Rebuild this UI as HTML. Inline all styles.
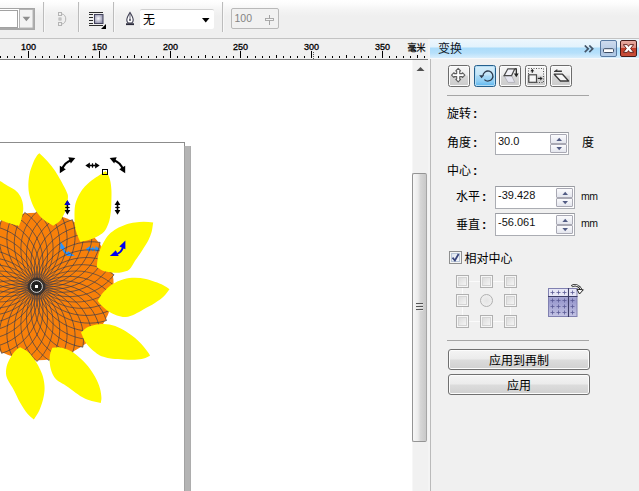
<!DOCTYPE html>
<html lang="zh-CN"><head><meta charset="utf-8"><title>变换</title>
<style>
*{box-sizing:border-box;margin:0;padding:0}
html,body{width:639px;height:491px;overflow:hidden;background:#fff}
body{position:relative;font-family:"Liberation Sans","Noto Sans CJK SC",sans-serif;font-size:12px;color:#000;line-height:1}
div,svg,span{position:absolute}
.toolbar{left:0;top:0;width:639px;height:38px;background:linear-gradient(#ffffff 0,#fcfcfc 4px,#f4f4f4 10px,#efefef 16px,#efefef 100%)}
.tline{left:0;top:38px;width:639px;height:1px;background:#c3c3c3}
.sep{top:2px;width:1px;height:30px;background:#bcbcbc;box-shadow:1px 0 0 #f8f8f8}
.ruler{left:0;top:39px;width:430px;height:20px;background:#f0f0f0}
.rline{left:0;top:59px;width:430px;height:1px;background:#7d7d7d}
.rl{top:42.600px;width:21px;text-align:center;font-size:9px;line-height:8px;height:8px;color:#000;letter-spacing:0;-webkit-text-stroke:0.3px #000}
.unit{left:407.500px;top:42.500px;font-size:9px;line-height:10px;color:#000;white-space:nowrap;-webkit-text-stroke:0.250px #000}
.cv{left:0;top:60px}
.vs{left:412px;top:60px;width:16px;height:431px;background:#f1f1f1;border-left:1px solid #f7f7f7}
.thumb{left:412px;top:173px;width:15px;height:269px;border:1px solid #949494;border-radius:2px;background:linear-gradient(90deg,#f7f7f7 0,#ececec 38%,#d6d6d6 58%,#c8c8c8 100%);border-right-color:#a6a6a6}
.grip{left:416px;top:303px;width:7px;height:1px;background:#555;box-shadow:0 1px 0 #e8e8e8,0 3px 0 #555,0 4px 0 #e8e8e8,0 6px 0 #555,0 7px 0 #e8e8e8}
.gap{left:428px;top:39px;width:2px;height:452px;background:#f4f4f4}
.dock{left:430px;top:39px;width:209px;height:452px;background:#f0f0f0;border-left:1px solid #bababa}
.dtitle{left:430px;top:39px;width:209px;height:19px;background:linear-gradient(#eef7fd 0,#e2f2fc 8px,#abdcfa 9px,#b6e0fb 14px,#d9eefc 19px)}
.dtitle .t{left:8px;top:3px;font-size:12px;line-height:15px;white-space:nowrap;color:#101828}
.dline{left:430px;top:58px;width:209px;height:1px;background:#f7f9fb}
.chev{left:583.500px;top:44.700px}
.wb{top:40px;width:17px;height:17px;border-radius:2px}
.wmin{left:600px;background:linear-gradient(#cddbee 0,#bccfe7 45%,#a9c2df 50%,#b4cbe6 100%);border:1px solid #587aa2}
.wcls{left:620px;background:linear-gradient(#e6aaa0 0,#dc8c80 45%,#c23c28 50%,#c8503c 100%);border:1px solid #431a18}
.tb{top:65px;width:22px;height:21.500px;border:1px solid #6c6c6c;border-radius:2.500px;background:linear-gradient(#f7f7f7 0,#ededed 45%,#d7d7d7 52%,#cbcbcb 100%);box-shadow:inset 0 0 0 1px #fbfbfb}
.tb svg{left:0;top:0}
.tb.sel{border-color:#245f8c;background:linear-gradient(#d6edf9 0,#c4e5f7 42%,#a6d8f5 52%,#8fcef4 76%,#5cb5ee 100%);box-shadow:inset 0 0 0 1px #b4dcf4;border-radius:2.500px}
.hr{left:447px;width:142px;height:1px;background:#a5a5a5}
.c{position:relative;font-weight:bold;font-size:13px;margin-left:2px;top:0px}
.lb{font-size:12px;line-height:14px;height:14px;white-space:nowrap;color:#000}
.inp{height:22.500px;background:#fff;border:1px solid #abadb3;border-top-color:#9a9ca2}
.inp .v{left:2px;top:2px;font-size:11px;line-height:12px;white-space:nowrap;color:#111}
.sp{width:17px;height:19px}
.sb{left:0;width:17px;height:9.500px;border:1px solid #a9a9b4;background:linear-gradient(#fbfbfd,#e4e6ee);border-radius:1px;overflow:hidden}
.sb:nth-child(1){top:0}
.sb:nth-child(2){top:9.500px}
.sb svg{left:-0.500px;top:-0.500px}
.mm{letter-spacing:-0.500px;font-size:10.500px;line-height:12px;white-space:nowrap;color:#111}
.cb{left:449px;top:251px;width:13px;height:13px;border:1px solid #8e8f8f;background:#f4f4f4}
.cb i{position:absolute;left:1px;top:1px;width:9px;height:9px;border:1px solid #b9c6d8;background:linear-gradient(135deg,#dfe6f0,#f6f8fb)}
.cb svg{left:0;top:0}
.ac{width:13px;height:13px;border:1px solid #b0b0b0;background:#f6f6f6}
.ac i{position:absolute;left:1px;top:1px;width:9px;height:9px;border:1px solid #d4d4d4;background:linear-gradient(135deg,#dcdcdc,#f4f4f4)}
.ar{width:13px;height:13px;border:1px solid #b0b0b0;border-radius:50%;background:radial-gradient(#e4e4e4,#f2f2f2)}
.agl{background:#fbfbfb}
.gi{left:546px;top:283px}
.btn{left:448px;width:142px;height:21px;border:1px solid #707070;border-radius:3px;background:linear-gradient(#f4f4f4 0,#ebebeb 48%,#dcdcdc 52%,#d0d0d0 100%);box-shadow:inset 0 0 0 1px #fcfcfc;text-align:center;font-size:12px;line-height:22px;white-space:nowrap}
.combo1{left:-2px;top:8px;width:37px;height:22px;border:1px solid #a6a6a6;border-right-width:2px;border-bottom-width:2px;background:#fff}
.combo1 .f{left:0;top:1px;width:19px;height:18px;border:1px solid #a9a9a9;background:#fff}
.combo1 .d{left:20px;top:0px;width:14px;height:19px;background:#f3f3f3}
.combo2{left:140px;top:9px;width:74px;height:20px;background:#fff;border-radius:2px;border-top:1px solid #d0d0d0}
.combo2 .t{left:3px;top:3px;font-size:12px;line-height:15px;color:#000}
.dis{left:231px;top:8px;width:48px;height:21px;border:1px solid #b9b9b9;border-radius:2px;background:#f1f1f1}
.dis .t{left:2.500px;top:3px;font-size:10.500px;line-height:12px;color:#848484}
</style></head><body>
<div class="toolbar"></div>
<svg style="left:0;top:6px" width="37" height="26" viewBox="0 6 37 26"><rect x="0" y="8" width="35" height="22" fill="#fff"/><rect x="0" y="8" width="35" height="1" fill="#a4a4a4"/><rect x="33" y="8" width="2" height="22" fill="#a8a8a8"/><rect x="0" y="28" width="35" height="2" fill="#a8a8a8"/><rect x="-1.500" y="10.500" width="19" height="17" fill="#fff" stroke="#a2a2a2" stroke-width="1"/><rect x="19.500" y="9.500" width="13.500" height="18.500" fill="#f3f3f3" stroke="#b4b4b4" stroke-width="1"/><path d="M22.600,16.800 H30.200 L26.400,21.200Z" fill="#8e8e8e"/></svg>
<div class="sep" style="left:43px"></div>
<svg style="left:55px;top:10px" width="14" height="18" viewBox="55 10 14 18"><g fill="none" stroke="#b4b4b4" stroke-width="1"><rect x="58.500" y="12.500" width="3" height="3"/><rect x="58.500" y="22.500" width="3" height="3"/><rect x="59" y="18" width="2" height="2"/><path d="M62,14 C67,14.500 67,23.500 62,24"/></g></svg>
<div class="sep" style="left:78px"></div>
<svg style="left:86px;top:10px" width="24" height="22" viewBox="86 10 24 22"><defs><radialGradient id="wg" cx="0.45" cy="0.45" r="0.6"><stop offset="0" stop-color="#fafafe"/><stop offset="1" stop-color="#8c8ca8"/></radialGradient></defs><path d="M89,12.500 H103 M89,14.500 H93 M89,17.500 H93 M89,20.500 H93 M89,23.500 H93 M89,25.500 H103" stroke="#2c2c2c" stroke-width="1" fill="none"/><rect x="94.500" y="14.500" width="8.500" height="9" fill="url(#wg)" stroke="#44445c" stroke-width="1"/><path d="M106,24 L106,29 L101,29Z" fill="#000"/></svg>
<div class="sep" style="left:113px"></div>
<svg style="left:124px;top:10px" width="12" height="18" viewBox="124 10 12 18"><path d="M130,12.500 C128.500,15 126.800,17.500 126.800,20 C126.800,21.500 127.500,22.500 128.200,23 H131.800 C132.500,22.500 133.200,21.500 133.200,20 C133.200,17.500 131.500,15 130,12.500Z" fill="#fff" stroke="#3c3c50" stroke-width="1.100"/><path d="M130,14 V19.500" stroke="#3c3c50" stroke-width="0.800"/><circle cx="130" cy="20" r="0.900" fill="#3c3c50"/><rect x="126" y="23.300" width="8" height="1.800" fill="#2a2a3a"/></svg>
<div class="combo2"><div class="t">无</div><svg style="left:62px;top:8px" width="8" height="5" viewBox="0 0 8 5"><path d="M0,0 H7.500 L3.750,4.500Z" fill="#000"/></svg></div>
<div class="sep" style="left:222px"></div>
<div class="dis"><div class="t">100</div><svg style="left:30.500px;top:5px" width="12" height="12" viewBox="0 0 12 12"><path d="M6.500,1 V11" stroke="#a4a4a4" stroke-width="1"/><rect x="2.500" y="4.500" width="8" height="2" fill="#f4f4f4" stroke="#a4a4a4" stroke-width="0.900"/></svg></div>
<div class="tline"></div>
<div class="ruler"></div>
<svg style="left:0;top:0" width="430" height="60" viewBox="0 0 430 60" fill="#000"><rect x="0" y="56" width="1" height="2"/><rect x="7" y="56" width="1" height="2"/><rect x="14" y="56" width="1" height="2"/><rect x="21" y="56" width="1" height="2"/><rect x="28" y="51" width="1" height="7"/><rect x="35" y="56" width="1" height="2"/><rect x="42" y="56" width="1" height="2"/><rect x="49" y="56" width="1" height="2"/><rect x="57" y="56" width="1" height="2"/><rect x="64" y="55" width="1" height="3"/><rect x="71" y="56" width="1" height="2"/><rect x="78" y="56" width="1" height="2"/><rect x="85" y="56" width="1" height="2"/><rect x="92" y="56" width="1" height="2"/><rect x="99" y="51" width="1" height="7"/><rect x="106" y="56" width="1" height="2"/><rect x="113" y="56" width="1" height="2"/><rect x="120" y="56" width="1" height="2"/><rect x="127" y="56" width="1" height="2"/><rect x="134" y="55" width="1" height="3"/><rect x="141" y="56" width="1" height="2"/><rect x="148" y="56" width="1" height="2"/><rect x="156" y="56" width="1" height="2"/><rect x="163" y="56" width="1" height="2"/><rect x="170" y="51" width="1" height="7"/><rect x="177" y="56" width="1" height="2"/><rect x="184" y="56" width="1" height="2"/><rect x="191" y="56" width="1" height="2"/><rect x="198" y="56" width="1" height="2"/><rect x="205" y="55" width="1" height="3"/><rect x="212" y="56" width="1" height="2"/><rect x="219" y="56" width="1" height="2"/><rect x="226" y="56" width="1" height="2"/><rect x="233" y="56" width="1" height="2"/><rect x="240" y="51" width="1" height="7"/><rect x="247" y="56" width="1" height="2"/><rect x="255" y="56" width="1" height="2"/><rect x="262" y="56" width="1" height="2"/><rect x="269" y="56" width="1" height="2"/><rect x="276" y="55" width="1" height="3"/><rect x="283" y="56" width="1" height="2"/><rect x="290" y="56" width="1" height="2"/><rect x="297" y="56" width="1" height="2"/><rect x="304" y="56" width="1" height="2"/><rect x="311" y="51" width="1" height="7"/><rect x="318" y="56" width="1" height="2"/><rect x="325" y="56" width="1" height="2"/><rect x="332" y="56" width="1" height="2"/><rect x="339" y="56" width="1" height="2"/><rect x="346" y="55" width="1" height="3"/><rect x="354" y="56" width="1" height="2"/><rect x="361" y="56" width="1" height="2"/><rect x="368" y="56" width="1" height="2"/><rect x="375" y="56" width="1" height="2"/><rect x="382" y="51" width="1" height="7"/><rect x="389" y="56" width="1" height="2"/><rect x="396" y="56" width="1" height="2"/><rect x="403" y="56" width="1" height="2"/><rect x="410" y="56" width="1" height="2"/><rect x="417" y="55" width="1" height="3"/><rect x="424" y="56" width="1" height="2"/><path d="M313.500,52 V59" stroke="#555" stroke-width="1" stroke-dasharray="1 1"/></svg>
<div class="rl" style="left:18.0px">100</div><div class="rl" style="left:89.0px">150</div><div class="rl" style="left:160.0px">200</div><div class="rl" style="left:230.0px">250</div><div class="rl" style="left:301.0px">300</div><div class="rl" style="left:372.0px">350</div>
<div class="unit">毫米</div>
<div class="rline"></div>
<svg class="cv" width="412" height="431" viewBox="0 60 412 431"><rect x="184" y="146" width="7" height="350" fill="#b4b4b4"/><rect x="184" y="146" width="1" height="350" fill="#a2a2a2"/><rect x="190" y="146" width="1" height="350" fill="#adadad"/><rect x="-1" y="142" width="186" height="1" fill="#8c8c8c"/><rect x="184" y="142" width="1" height="4" fill="#8c8c8c"/><g transform="translate(37.0,286.5) scale(1.04,1)"><circle r="73.800" fill="#f8800a"/><g fill="#f8800a" stroke="none"><path d="M0,0 C-20.7,-20.7 -20.7,-54.3 0,-75 C20.7,-54.3 20.7,-20.7 0,0Z" transform="rotate(0.00)"/><path d="M0,0 C-20.7,-20.7 -20.7,-54.3 0,-75 C20.7,-54.3 20.7,-20.7 0,0Z" transform="rotate(9.00)"/><path d="M0,0 C-20.7,-20.7 -20.7,-54.3 0,-75 C20.7,-54.3 20.7,-20.7 0,0Z" transform="rotate(18.00)"/><path d="M0,0 C-20.7,-20.7 -20.7,-54.3 0,-75 C20.7,-54.3 20.7,-20.7 0,0Z" transform="rotate(27.00)"/><path d="M0,0 C-20.7,-20.7 -20.7,-54.3 0,-75 C20.7,-54.3 20.7,-20.7 0,0Z" transform="rotate(36.00)"/><path d="M0,0 C-20.7,-20.7 -20.7,-54.3 0,-75 C20.7,-54.3 20.7,-20.7 0,0Z" transform="rotate(45.00)"/><path d="M0,0 C-20.7,-20.7 -20.7,-54.3 0,-75 C20.7,-54.3 20.7,-20.7 0,0Z" transform="rotate(54.00)"/><path d="M0,0 C-20.7,-20.7 -20.7,-54.3 0,-75 C20.7,-54.3 20.7,-20.7 0,0Z" transform="rotate(63.00)"/><path d="M0,0 C-20.7,-20.7 -20.7,-54.3 0,-75 C20.7,-54.3 20.7,-20.7 0,0Z" transform="rotate(72.00)"/><path d="M0,0 C-20.7,-20.7 -20.7,-54.3 0,-75 C20.7,-54.3 20.7,-20.7 0,0Z" transform="rotate(81.00)"/><path d="M0,0 C-20.7,-20.7 -20.7,-54.3 0,-75 C20.7,-54.3 20.7,-20.7 0,0Z" transform="rotate(90.00)"/><path d="M0,0 C-20.7,-20.7 -20.7,-54.3 0,-75 C20.7,-54.3 20.7,-20.7 0,0Z" transform="rotate(99.00)"/><path d="M0,0 C-20.7,-20.7 -20.7,-54.3 0,-75 C20.7,-54.3 20.7,-20.7 0,0Z" transform="rotate(108.00)"/><path d="M0,0 C-20.7,-20.7 -20.7,-54.3 0,-75 C20.7,-54.3 20.7,-20.7 0,0Z" transform="rotate(117.00)"/><path d="M0,0 C-20.7,-20.7 -20.7,-54.3 0,-75 C20.7,-54.3 20.7,-20.7 0,0Z" transform="rotate(126.00)"/><path d="M0,0 C-20.7,-20.7 -20.7,-54.3 0,-75 C20.7,-54.3 20.7,-20.7 0,0Z" transform="rotate(135.00)"/><path d="M0,0 C-20.7,-20.7 -20.7,-54.3 0,-75 C20.7,-54.3 20.7,-20.7 0,0Z" transform="rotate(144.00)"/><path d="M0,0 C-20.7,-20.7 -20.7,-54.3 0,-75 C20.7,-54.3 20.7,-20.7 0,0Z" transform="rotate(153.00)"/><path d="M0,0 C-20.7,-20.7 -20.7,-54.3 0,-75 C20.7,-54.3 20.7,-20.7 0,0Z" transform="rotate(162.00)"/><path d="M0,0 C-20.7,-20.7 -20.7,-54.3 0,-75 C20.7,-54.3 20.7,-20.7 0,0Z" transform="rotate(171.00)"/><path d="M0,0 C-20.7,-20.7 -20.7,-54.3 0,-75 C20.7,-54.3 20.7,-20.7 0,0Z" transform="rotate(180.00)"/><path d="M0,0 C-20.7,-20.7 -20.7,-54.3 0,-75 C20.7,-54.3 20.7,-20.7 0,0Z" transform="rotate(189.00)"/><path d="M0,0 C-20.7,-20.7 -20.7,-54.3 0,-75 C20.7,-54.3 20.7,-20.7 0,0Z" transform="rotate(198.00)"/><path d="M0,0 C-20.7,-20.7 -20.7,-54.3 0,-75 C20.7,-54.3 20.7,-20.7 0,0Z" transform="rotate(207.00)"/><path d="M0,0 C-20.7,-20.7 -20.7,-54.3 0,-75 C20.7,-54.3 20.7,-20.7 0,0Z" transform="rotate(216.00)"/><path d="M0,0 C-20.7,-20.7 -20.7,-54.3 0,-75 C20.7,-54.3 20.7,-20.7 0,0Z" transform="rotate(225.00)"/><path d="M0,0 C-20.7,-20.7 -20.7,-54.3 0,-75 C20.7,-54.3 20.7,-20.7 0,0Z" transform="rotate(234.00)"/><path d="M0,0 C-20.7,-20.7 -20.7,-54.3 0,-75 C20.7,-54.3 20.7,-20.7 0,0Z" transform="rotate(243.00)"/><path d="M0,0 C-20.7,-20.7 -20.7,-54.3 0,-75 C20.7,-54.3 20.7,-20.7 0,0Z" transform="rotate(252.00)"/><path d="M0,0 C-20.7,-20.7 -20.7,-54.3 0,-75 C20.7,-54.3 20.7,-20.7 0,0Z" transform="rotate(261.00)"/><path d="M0,0 C-20.7,-20.7 -20.7,-54.3 0,-75 C20.7,-54.3 20.7,-20.7 0,0Z" transform="rotate(270.00)"/><path d="M0,0 C-20.7,-20.7 -20.7,-54.3 0,-75 C20.7,-54.3 20.7,-20.7 0,0Z" transform="rotate(279.00)"/><path d="M0,0 C-20.7,-20.7 -20.7,-54.3 0,-75 C20.7,-54.3 20.7,-20.7 0,0Z" transform="rotate(288.00)"/><path d="M0,0 C-20.7,-20.7 -20.7,-54.3 0,-75 C20.7,-54.3 20.7,-20.7 0,0Z" transform="rotate(297.00)"/><path d="M0,0 C-20.7,-20.7 -20.7,-54.3 0,-75 C20.7,-54.3 20.7,-20.7 0,0Z" transform="rotate(306.00)"/><path d="M0,0 C-20.7,-20.7 -20.7,-54.3 0,-75 C20.7,-54.3 20.7,-20.7 0,0Z" transform="rotate(315.00)"/><path d="M0,0 C-20.7,-20.7 -20.7,-54.3 0,-75 C20.7,-54.3 20.7,-20.7 0,0Z" transform="rotate(324.00)"/><path d="M0,0 C-20.7,-20.7 -20.7,-54.3 0,-75 C20.7,-54.3 20.7,-20.7 0,0Z" transform="rotate(333.00)"/><path d="M0,0 C-20.7,-20.7 -20.7,-54.3 0,-75 C20.7,-54.3 20.7,-20.7 0,0Z" transform="rotate(342.00)"/><path d="M0,0 C-20.7,-20.7 -20.7,-54.3 0,-75 C20.7,-54.3 20.7,-20.7 0,0Z" transform="rotate(351.00)"/></g></g><g fill="#2a94ff"><path d="M60.300,241.600 L60.300,249.200 L65.300,248Z"/><path d="M74.900,255.900 L66.400,255.900 L68,251Z"/></g><path d="M62.600,248 Q64,252.500 68,254.200" fill="none" stroke="#2a94ff" stroke-width="1.900"/><g fill="#2a94ff" transform="translate(92.800,249)"><path d="M-7.200,0 L-2.600,-2.900 L-2.600,2.900Z"/><path d="M7.200,0 L2.600,-2.900 L2.600,2.900Z"/><rect x="-3" y="-0.800" width="6" height="1.600"/><rect x="-0.600" y="-2.200" width="1.200" height="4.400"/></g><g transform="translate(37.0,286.5) scale(1.04,1)"><g fill="none" stroke="#2f3850" stroke-width="0.58" stroke-linejoin="round"><path d="M0,0 C-20.7,-20.7 -20.7,-54.3 0,-75 C20.7,-54.3 20.7,-20.7 0,0Z" transform="rotate(0.00)"/><path d="M0,0 C-20.7,-20.7 -20.7,-54.3 0,-75 C20.7,-54.3 20.7,-20.7 0,0Z" transform="rotate(9.00)"/><path d="M0,0 C-20.7,-20.7 -20.7,-54.3 0,-75 C20.7,-54.3 20.7,-20.7 0,0Z" transform="rotate(18.00)"/><path d="M0,0 C-20.7,-20.7 -20.7,-54.3 0,-75 C20.7,-54.3 20.7,-20.7 0,0Z" transform="rotate(27.00)"/><path d="M0,0 C-20.7,-20.7 -20.7,-54.3 0,-75 C20.7,-54.3 20.7,-20.7 0,0Z" transform="rotate(36.00)"/><path d="M0,0 C-20.7,-20.7 -20.7,-54.3 0,-75 C20.7,-54.3 20.7,-20.7 0,0Z" transform="rotate(45.00)"/><path d="M0,0 C-20.7,-20.7 -20.7,-54.3 0,-75 C20.7,-54.3 20.7,-20.7 0,0Z" transform="rotate(54.00)"/><path d="M0,0 C-20.7,-20.7 -20.7,-54.3 0,-75 C20.7,-54.3 20.7,-20.7 0,0Z" transform="rotate(63.00)"/><path d="M0,0 C-20.7,-20.7 -20.7,-54.3 0,-75 C20.7,-54.3 20.7,-20.7 0,0Z" transform="rotate(72.00)"/><path d="M0,0 C-20.7,-20.7 -20.7,-54.3 0,-75 C20.7,-54.3 20.7,-20.7 0,0Z" transform="rotate(81.00)"/><path d="M0,0 C-20.7,-20.7 -20.7,-54.3 0,-75 C20.7,-54.3 20.7,-20.7 0,0Z" transform="rotate(90.00)"/><path d="M0,0 C-20.7,-20.7 -20.7,-54.3 0,-75 C20.7,-54.3 20.7,-20.7 0,0Z" transform="rotate(99.00)"/><path d="M0,0 C-20.7,-20.7 -20.7,-54.3 0,-75 C20.7,-54.3 20.7,-20.7 0,0Z" transform="rotate(108.00)"/><path d="M0,0 C-20.7,-20.7 -20.7,-54.3 0,-75 C20.7,-54.3 20.7,-20.7 0,0Z" transform="rotate(117.00)"/><path d="M0,0 C-20.7,-20.7 -20.7,-54.3 0,-75 C20.7,-54.3 20.7,-20.7 0,0Z" transform="rotate(126.00)"/><path d="M0,0 C-20.7,-20.7 -20.7,-54.3 0,-75 C20.7,-54.3 20.7,-20.7 0,0Z" transform="rotate(135.00)"/><path d="M0,0 C-20.7,-20.7 -20.7,-54.3 0,-75 C20.7,-54.3 20.7,-20.7 0,0Z" transform="rotate(144.00)"/><path d="M0,0 C-20.7,-20.7 -20.7,-54.3 0,-75 C20.7,-54.3 20.7,-20.7 0,0Z" transform="rotate(153.00)"/><path d="M0,0 C-20.7,-20.7 -20.7,-54.3 0,-75 C20.7,-54.3 20.7,-20.7 0,0Z" transform="rotate(162.00)"/><path d="M0,0 C-20.7,-20.7 -20.7,-54.3 0,-75 C20.7,-54.3 20.7,-20.7 0,0Z" transform="rotate(171.00)"/><path d="M0,0 C-20.7,-20.7 -20.7,-54.3 0,-75 C20.7,-54.3 20.7,-20.7 0,0Z" transform="rotate(180.00)"/><path d="M0,0 C-20.7,-20.7 -20.7,-54.3 0,-75 C20.7,-54.3 20.7,-20.7 0,0Z" transform="rotate(189.00)"/><path d="M0,0 C-20.7,-20.7 -20.7,-54.3 0,-75 C20.7,-54.3 20.7,-20.7 0,0Z" transform="rotate(198.00)"/><path d="M0,0 C-20.7,-20.7 -20.7,-54.3 0,-75 C20.7,-54.3 20.7,-20.7 0,0Z" transform="rotate(207.00)"/><path d="M0,0 C-20.7,-20.7 -20.7,-54.3 0,-75 C20.7,-54.3 20.7,-20.7 0,0Z" transform="rotate(216.00)"/><path d="M0,0 C-20.7,-20.7 -20.7,-54.3 0,-75 C20.7,-54.3 20.7,-20.7 0,0Z" transform="rotate(225.00)"/><path d="M0,0 C-20.7,-20.7 -20.7,-54.3 0,-75 C20.7,-54.3 20.7,-20.7 0,0Z" transform="rotate(234.00)"/><path d="M0,0 C-20.7,-20.7 -20.7,-54.3 0,-75 C20.7,-54.3 20.7,-20.7 0,0Z" transform="rotate(243.00)"/><path d="M0,0 C-20.7,-20.7 -20.7,-54.3 0,-75 C20.7,-54.3 20.7,-20.7 0,0Z" transform="rotate(252.00)"/><path d="M0,0 C-20.7,-20.7 -20.7,-54.3 0,-75 C20.7,-54.3 20.7,-20.7 0,0Z" transform="rotate(261.00)"/><path d="M0,0 C-20.7,-20.7 -20.7,-54.3 0,-75 C20.7,-54.3 20.7,-20.7 0,0Z" transform="rotate(270.00)"/><path d="M0,0 C-20.7,-20.7 -20.7,-54.3 0,-75 C20.7,-54.3 20.7,-20.7 0,0Z" transform="rotate(279.00)"/><path d="M0,0 C-20.7,-20.7 -20.7,-54.3 0,-75 C20.7,-54.3 20.7,-20.7 0,0Z" transform="rotate(288.00)"/><path d="M0,0 C-20.7,-20.7 -20.7,-54.3 0,-75 C20.7,-54.3 20.7,-20.7 0,0Z" transform="rotate(297.00)"/><path d="M0,0 C-20.7,-20.7 -20.7,-54.3 0,-75 C20.7,-54.3 20.7,-20.7 0,0Z" transform="rotate(306.00)"/><path d="M0,0 C-20.7,-20.7 -20.7,-54.3 0,-75 C20.7,-54.3 20.7,-20.7 0,0Z" transform="rotate(315.00)"/><path d="M0,0 C-20.7,-20.7 -20.7,-54.3 0,-75 C20.7,-54.3 20.7,-20.7 0,0Z" transform="rotate(324.00)"/><path d="M0,0 C-20.7,-20.7 -20.7,-54.3 0,-75 C20.7,-54.3 20.7,-20.7 0,0Z" transform="rotate(333.00)"/><path d="M0,0 C-20.7,-20.7 -20.7,-54.3 0,-75 C20.7,-54.3 20.7,-20.7 0,0Z" transform="rotate(342.00)"/><path d="M0,0 C-20.7,-20.7 -20.7,-54.3 0,-75 C20.7,-54.3 20.7,-20.7 0,0Z" transform="rotate(351.00)"/></g></g><g fill="#fffa00"><path d="M39.4,153.3 C42.2,156.0 45.1,158.6 47.7,161.5 C50.3,164.4 52.7,167.3 55.0,170.7 C57.3,174.1 59.5,178.0 61.5,181.7 C63.5,185.4 65.9,189.9 67.0,192.7 C68.1,195.4 68.1,195.4 67.9,198.2 C67.7,200.9 67.2,205.5 66.0,209.2 C64.8,212.9 62.6,217.4 60.5,220.2 C58.4,222.9 55.6,223.9 53.2,225.7 C49.5,223.3 45.2,221.2 42.2,218.4 C39.2,215.7 36.9,212.6 34.9,209.2 C32.9,205.8 31.4,201.9 30.3,198.2 C29.2,194.5 28.5,191.2 28.4,187.2 C28.2,183.2 28.6,178.4 29.4,174.4 C30.2,170.4 31.8,166.4 33.0,163.3 C34.2,160.2 35.6,157.7 36.7,156.0 C37.8,154.3 38.5,154.2 39.4,153.3Z"/><path d="M-6.0,178.0 C-4.0,179.0 -2.3,179.7 0.0,181.0 C2.3,182.3 5.5,184.5 8.0,186.0 C10.5,187.5 13.1,188.5 15.0,190.0 C16.9,191.5 18.2,193.0 19.5,195.0 C20.8,197.0 21.9,199.5 22.5,202.0 C23.1,204.5 23.4,207.2 23.2,210.0 C23.0,212.8 22.2,216.3 21.5,219.0 C20.8,221.7 19.8,223.7 19.0,226.0 C16.0,225.2 13.2,224.5 10.0,223.5 C6.8,222.5 2.7,220.9 0.0,220.0 C-2.7,219.1 -4.0,218.7 -6.0,218.0 C-6.0,204.7 -6.0,191.3 -6.0,178.0Z"/><path d="M105.5,171.0 C106.4,172.3 107.5,173.2 108.3,175.0 C109.1,176.8 110.0,179.5 110.5,182.0 C111.0,184.5 111.2,187.0 111.4,190.0 C111.6,193.0 111.5,196.7 111.4,200.0 C111.3,203.3 111.3,206.7 111.0,210.0 C110.7,213.3 110.2,217.0 109.5,220.0 C108.8,223.0 107.5,225.9 106.5,228.0 C105.5,230.1 105.1,230.8 103.5,232.3 C101.9,233.8 99.4,235.5 96.8,236.8 C94.2,238.1 90.8,239.5 88.0,240.3 C85.2,241.1 82.8,241.3 80.2,241.8 C79.1,239.2 77.9,236.6 77.0,234.0 C76.1,231.4 75.4,229.0 75.0,226.0 C74.6,223.0 74.5,219.3 74.5,216.0 C74.5,212.7 74.5,209.0 75.0,206.0 C75.5,203.0 76.3,200.7 77.5,198.0 C78.7,195.3 80.2,192.4 82.0,190.0 C83.8,187.6 85.8,185.5 88.0,183.5 C90.2,181.5 92.9,179.5 95.0,178.0 C97.1,176.5 98.8,175.7 100.5,174.5 C102.2,173.3 103.8,172.2 105.5,171.0Z"/><path d="M153.2,222.6 C152.7,225.7 152.4,229.1 151.6,232.0 C150.8,234.9 149.8,237.4 148.5,240.0 C147.2,242.6 145.3,245.4 143.8,247.8 C142.3,250.2 141.0,252.3 139.5,254.5 C138.0,256.7 136.6,258.5 134.9,261.0 C133.2,263.5 131.5,267.7 129.3,269.6 C127.2,271.5 124.4,271.7 122.0,272.2 C119.6,272.7 117.6,272.9 114.7,272.8 C111.8,272.7 107.5,272.2 104.5,271.3 C101.5,270.4 99.4,268.6 96.8,267.3 C97.1,264.5 97.1,261.7 97.6,259.0 C98.0,256.3 98.5,253.8 99.5,251.0 C100.5,248.2 101.9,245.2 103.5,242.5 C105.1,239.8 106.8,236.8 109.0,234.5 C111.2,232.2 113.7,230.5 116.5,228.8 C119.3,227.1 122.9,225.6 126.0,224.5 C129.1,223.4 132.0,222.9 135.0,222.5 C138.0,222.1 140.8,221.8 143.8,221.8 C146.8,221.8 150.1,222.3 153.2,222.6Z"/><path d="M169.5,289.2 C167.6,291.6 166.3,294.0 163.9,296.3 C161.5,298.6 158.3,300.8 154.9,303.0 C151.5,305.2 147.0,307.4 143.7,309.3 C140.3,311.2 137.8,312.9 134.8,314.2 C131.8,315.5 128.8,316.7 125.8,316.9 C122.8,317.1 119.9,316.4 116.9,315.4 C113.9,314.4 110.5,312.6 107.9,310.9 C105.3,309.2 102.9,307.0 101.2,305.3 C99.5,303.6 98.8,302.3 97.6,300.8 C99.5,298.0 100.9,295.1 103.4,292.3 C105.9,289.5 109.0,286.4 112.4,284.2 C115.8,282.0 119.9,280.3 123.6,279.2 C127.3,278.1 131.1,277.7 134.8,277.7 C138.5,277.7 142.3,278.2 146.0,279.0 C149.7,279.8 154.0,281.4 157.2,282.6 C160.4,283.8 162.9,285.1 165.0,286.2 C167.1,287.3 168.0,288.2 169.5,289.2Z"/><path d="M150.0,355.7 C147.9,356.7 146.2,357.9 143.7,358.6 C141.2,359.3 138.2,359.6 134.8,359.7 C131.5,359.8 127.3,359.6 123.6,359.5 C119.9,359.4 115.8,359.2 112.4,358.8 C109.0,358.4 106.0,357.7 103.4,356.8 C100.8,355.9 98.9,354.9 96.7,353.4 C94.5,351.9 92.0,349.8 90.0,347.8 C88.0,345.8 86.5,344.1 85.0,341.5 C83.5,338.9 82.3,335.5 81.0,332.5 C82.5,331.2 83.6,329.7 85.5,328.5 C87.4,327.3 89.9,326.2 92.5,325.5 C95.1,324.8 97.9,324.2 101.2,324.1 C104.5,324.1 108.7,324.2 112.4,325.2 C116.1,326.2 119.9,327.8 123.6,329.9 C127.3,332.0 131.5,335.0 134.8,337.8 C138.2,340.6 141.4,344.1 143.7,346.7 C146.0,349.3 147.6,351.7 148.7,353.2 C149.8,354.7 149.6,354.9 150.0,355.7Z"/><path d="M100.8,403.0 C97.8,402.3 94.8,401.9 91.7,401.0 C88.7,400.1 85.6,399.0 82.5,397.3 C79.4,395.6 76.3,393.0 73.3,390.9 C70.2,388.8 67.0,386.3 64.2,384.5 C61.5,382.7 58.8,381.7 56.8,379.9 C54.8,378.1 53.4,376.1 52.3,373.5 C51.1,370.9 50.3,367.4 49.9,364.3 C49.5,361.2 49.5,357.9 49.9,355.2 C50.3,352.4 51.5,350.3 52.3,347.8 C55.0,347.7 57.6,347.0 60.5,347.5 C63.4,348.0 66.7,349.0 69.7,350.6 C72.8,352.2 75.8,354.4 78.8,357.0 C81.8,359.6 85.2,362.8 88.0,366.2 C90.8,369.6 93.3,373.5 95.3,377.2 C97.3,380.9 98.9,384.8 99.9,388.2 C100.9,391.6 101.2,394.8 101.4,397.3 C101.6,399.8 101.0,401.1 100.8,403.0Z"/><path d="M33.9,419.5 C31.8,417.6 29.8,416.6 27.5,413.8 C25.2,411.0 22.5,406.8 20.2,402.8 C17.9,398.8 15.8,393.7 13.8,390.0 C11.8,386.3 9.6,383.6 8.3,380.8 C7.0,378.1 6.2,376.2 6.0,373.5 C5.8,370.8 6.3,367.4 7.3,364.3 C8.3,361.2 10.4,357.6 11.9,355.2 C13.4,352.8 15.1,351.0 16.5,349.7 C17.9,348.4 19.0,348.1 20.2,347.3 C22.6,348.7 25.2,349.6 27.5,351.5 C29.8,353.4 31.9,356.1 33.9,358.8 C35.9,361.6 37.9,364.9 39.4,368.0 C40.9,371.1 42.2,373.8 43.1,377.2 C44.0,380.6 44.6,384.5 44.6,388.2 C44.6,391.9 44.0,395.5 43.1,399.2 C42.2,402.9 40.9,406.8 39.4,410.2 C37.9,413.6 35.7,416.4 33.9,419.5Z"/></g><g fill="none" stroke="#000" stroke-width="2.2"><path d="M62,169.500 Q64.500,162.500 71.500,160"/><path d="M113.500,160 Q120.500,162.500 123,169.500"/></g><g fill="#000"><path d="M59.800,173.200 L59.800,165.800 L65.800,169.300Z"/><path d="M75.300,158 L68.300,157.300 L70.800,163.600Z"/><path d="M109.700,158 L116.700,157.300 L114.200,163.600Z"/><path d="M125.200,173.200 L125.200,165.800 L119.200,169.300Z"/></g><g fill="#000" transform="translate(92.5,165.5)"><path d="M-7.200,0 L-2.600,-2.900 L-2.600,2.900Z"/><path d="M7.200,0 L2.600,-2.900 L2.600,2.900Z"/><rect x="-3" y="-0.800" width="6" height="1.600"/><rect x="-0.600" y="-2.200" width="1.200" height="4.400"/></g><rect x="102.500" y="169.500" width="5" height="5" fill="none" stroke="#000" stroke-width="1"/><g fill="#000" transform="translate(67.4,207.5)"><path d="M0,-7.300 L-2.900,-2.600 L2.900,-2.600Z"/><path d="M0,7.300 L-2.900,2.600 L2.900,2.600Z"/><rect x="-0.800" y="-3" width="1.600" height="6"/><rect x="-2.200" y="-0.600" width="4.400" height="1.200"/></g><path d="M67.400,200.200 L64.500,204.900 L70.300,204.900Z" fill="#0000d0"/><g fill="#000" transform="translate(117.5,207.5)"><path d="M0,-7.300 L-2.900,-2.600 L2.900,-2.600Z"/><path d="M0,7.300 L-2.900,2.600 L2.900,2.600Z"/><rect x="-0.800" y="-3" width="1.600" height="6"/><rect x="-2.200" y="-0.600" width="4.400" height="1.200"/></g><g fill="#0000f0"><path d="M109.800,256.100 L118.700,256.100 L115.800,250.200Z"/><path d="M125.400,240.600 L125.400,249.200 L119.300,246.400Z"/></g><path d="M117.200,254 Q121.500,252 123,247.500" fill="none" stroke="#0000f0" stroke-width="1.900"/><g transform="translate(36.5,286.5)"><circle r="9" fill="#2a2a2a" opacity="0.700"/><circle r="5.900" fill="#202020" stroke="#ececec" stroke-width="0.900"/><rect x="-1.500" y="-1.500" width="3" height="3" fill="#fff"/></g></svg>
<div class="vs"></div>
<svg style="left:416px;top:66px" width="9" height="6" viewBox="0 0 9 6"><path d="M0.500,5 L4.500,1 L8.500,5Z" fill="#505050"/></svg>
<div class="thumb"></div><div class="grip"></div>
<div class="gap"></div>
<div class="dock"></div>
<div class="dtitle"><div class="t">变换</div></div>
<div class="dline"></div>
<svg class="chev" width="10" height="8" viewBox="0 0 10 8"><path d="M0.800,0.500 L4.200,3.800 L0.800,7.100 M5.300,0.500 L8.700,3.800 L5.300,7.100" fill="none" stroke="#44566a" stroke-width="1.700"/></svg>
<div class="wb wmin"><svg style="left:2px;top:7px" width="11" height="6" viewBox="0 0 11 6"><rect x="0.500" y="0.700" width="10" height="3.800" rx="1" fill="#fff" stroke="#3c4c64" stroke-width="1"/></svg></div>
<div class="wb wcls"><svg style="left:2px;top:3px" width="11" height="9" viewBox="0 0 11 9"><path d="M0.300,0.600 H4.300 L5.500,2.400 L6.700,0.600 H10.700 L7.600,4.500 L10.700,8.400 H6.700 L5.500,6.600 L4.300,8.400 H0.300 L3.400,4.500Z" fill="#fff" stroke="#5a1a14" stroke-width="0.900" stroke-linejoin="round"/></svg></div>
<div class="tb" style="left:448px"><svg width="20" height="20" viewBox="0 0 20 20"><path d="M7.7,7.6 L7.7,5.1 L6.8,4.9 L9.2,2.4 L11.6,4.9 L10.7,5.1 L10.7,7.6 L13.2,7.6 L13.4,6.7 L15.9,9.1 L13.4,11.5 L13.2,10.6 L10.7,10.6 L10.7,13.1 L11.6,13.3 L9.2,15.8 L6.8,13.3 L7.7,13.1 L7.7,10.6 L5.2,10.6 L5.0,11.5 L2.5,9.1 L5.0,6.7 L5.2,7.6Z" fill="#fff" stroke="#5e5e5e" stroke-width="1.100" stroke-linejoin="round"/></svg></div><div class="tb sel" style="left:474px"><svg width="20" height="20" viewBox="0 0 20 20"><path d="M9.400,13.600 A5,5 0 1 0 7.900,9.800" fill="none" stroke="#2f3c4e" stroke-width="1.300"/><path d="M4.100,9.200 L9.100,9.200 L6.600,12.200Z" fill="#2f3c4e"/></svg></div><div class="tb" style="left:499px"><svg width="20" height="20" viewBox="0 0 20 20"><path d="M4.100,9.600 L7.900,16.400 L14.800,16.400 L11.600,9.600Z" fill="#e6e6f0" stroke="#b4b4bc" stroke-width="1"/><path d="M4.100,9.600 L7.900,2.800 L14.800,2.800 L11.600,9.600Z" fill="#f2f2f8" stroke="#4a4a4a" stroke-width="1.200"/><path d="M14.800,2.800 L16.300,2.800 L16.300,8.500" fill="none" stroke="#222" stroke-width="1.200"/><path d="M13.900,7.400 L18.700,7.400 L16.300,11.200Z" fill="#222"/></svg></div><div class="tb" style="left:525px"><svg width="20" height="20" viewBox="0 0 20 20"><rect x="2.500" y="2.500" width="15" height="14" fill="none" stroke="#555" stroke-width="1" stroke-dasharray="1 1.500"/><rect x="2.800" y="8.800" width="7.700" height="7.500" fill="#f6f6f6" stroke="#4a4a4a" stroke-width="1.200"/><path d="M6.300,6.800 L6.300,3.800" stroke="#222" stroke-width="1.200"/><path d="M4.300,5.300 L6.300,3 L8.300,5.300Z" fill="#222"/><path d="M11.800,12.400 L15,12.400" stroke="#222" stroke-width="1.200"/><path d="M14.300,10.400 L16.600,12.400 L14.300,14.400Z" fill="#222"/></svg></div><div class="tb" style="left:550px"><svg width="20" height="20" viewBox="0 0 20 20"><path d="M3.200,8.200 L11.500,8.200 L17.600,15 L9.400,15Z" fill="#f6f6f6" stroke="#3a3a3a" stroke-width="1.300" stroke-linejoin="round"/><path d="M3,5.300 L6.300,2.900 L6.300,4.500 L10.900,4.500 L10.900,6 L3,6Z" fill="#3a3a3a"/></svg></div>
<div class="hr" style="top:95px"></div>
<div class="lb" style="left:447px;top:107px">旋转<span class="c">:</span></div>
<div class="lb" style="left:447px;top:136px">角度<span class="c">:</span></div>
<div class="inp" style="left:495px;top:132.200px;width:74px"><div class="v">30.0</div></div><div class="sp" style="left:550px;top:134px"><div class="sb"><svg width="16" height="9" viewBox="0 0 16 9"><path d="M5.400,6 L8.200,2.800 L11,6Z" fill="#525c84"/></svg></div><div class="sb"><svg width="16" height="9" viewBox="0 0 16 9"><path d="M5.400,3 L8.200,6.200 L11,3Z" fill="#525c84"/></svg></div></div>
<div class="lb" style="left:582px;top:136px">度</div>
<div class="lb" style="left:447px;top:164px">中心<span class="c">:</span></div>
<div class="lb" style="left:456px;top:190px">水平<span class="c">:</span></div>
<div class="inp" style="left:495px;top:186px;width:80px"><div class="v">-39.428</div></div><div class="sp" style="left:556px;top:188px"><div class="sb"><svg width="16" height="9" viewBox="0 0 16 9"><path d="M5.400,6 L8.200,2.800 L11,6Z" fill="#525c84"/></svg></div><div class="sb"><svg width="16" height="9" viewBox="0 0 16 9"><path d="M5.400,3 L8.200,6.200 L11,3Z" fill="#525c84"/></svg></div></div>
<div class="mm" style="left:581px;top:190px">mm</div>
<div class="lb" style="left:456px;top:218px">垂直<span class="c">:</span></div>
<div class="inp" style="left:495px;top:213px;width:80px"><div class="v">-56.061</div></div><div class="sp" style="left:556px;top:215px"><div class="sb"><svg width="16" height="9" viewBox="0 0 16 9"><path d="M5.400,6 L8.200,2.800 L11,6Z" fill="#525c84"/></svg></div><div class="sb"><svg width="16" height="9" viewBox="0 0 16 9"><path d="M5.400,3 L8.200,6.200 L11,3Z" fill="#525c84"/></svg></div></div>
<div class="mm" style="left:581px;top:217px">mm</div>
<div class="cb"><i></i><svg width="11" height="11" viewBox="0 0 11 11"><path d="M2.500,5.600 L4.900,8.500 L8.600,2" fill="none" stroke="#3a467c" stroke-width="1.800"/></svg></div>
<div class="lb" style="left:464.500px;top:252px">相对中心</div>
<div class="agl" style="left:469px;top:281px;width:11px;height:1px"></div><div class="agl" style="left:493px;top:281px;width:11px;height:1px"></div><div class="agl" style="left:469px;top:321px;width:11px;height:1px"></div><div class="agl" style="left:493px;top:321px;width:11px;height:1px"></div><div class="agl" style="left:462px;top:288px;width:1px;height:6px"></div><div class="agl" style="left:510px;top:288px;width:1px;height:6px"></div><div class="agl" style="left:462px;top:307px;width:1px;height:8px"></div><div class="agl" style="left:510px;top:307px;width:1px;height:8px"></div><div class="ac" style="left:456px;top:275px"><i></i></div><div class="ac" style="left:480px;top:275px"><i></i></div><div class="ac" style="left:504px;top:275px"><i></i></div><div class="ac" style="left:456px;top:294px"><i></i></div><div class="ar" style="left:480px;top:294px"></div><div class="ac" style="left:504px;top:294px"><i></i></div><div class="ac" style="left:456px;top:315px"><i></i></div><div class="ac" style="left:480px;top:315px"><i></i></div><div class="ac" style="left:504px;top:315px"><i></i></div>
<svg class="gi" width="40" height="36" viewBox="546 283 40 36"><defs><linearGradient id="gp" x1="0" y1="0" x2="0" y2="1"><stop offset="0" stop-color="#c9c9e6"/><stop offset="0.45" stop-color="#9a9ace"/><stop offset="1" stop-color="#c4c4e4"/></linearGradient></defs><rect x="548" y="288" width="29" height="28.5" fill="url(#gp)"/><rect x="548" y="288" width="29" height="8" fill="#e6e6f6"/><rect x="548.5" y="288.5" width="28.5" height="28" fill="none" stroke="#8080b0" stroke-width="1"/><path d="M548,296.5 H577.5 M568.500,288 V317" stroke="#3c3c68" stroke-width="1.1" fill="none"/><path d="M550.5,292.5 h4 M552.5,290.5 v4 M556.5,292.5 h4 M558.5,290.5 v4 M562.5,292.5 h4 M564.5,290.5 v4 M570.5,292.5 h4 M572.5,290.5 v4 M550.5,300.5 h4 M552.5,298.5 v4 M556.5,300.5 h4 M558.5,298.5 v4 M562.5,300.5 h4 M564.5,298.5 v4 M570.5,300.5 h4 M572.5,298.5 v4 M550.5,306.5 h4 M552.5,304.5 v4 M556.5,306.5 h4 M558.5,304.5 v4 M562.5,306.5 h4 M564.5,304.5 v4 M570.5,306.5 h4 M572.5,304.5 v4 M550.5,312.5 h4 M552.5,310.5 v4 M556.5,312.5 h4 M558.5,310.5 v4 M562.5,312.5 h4 M564.5,310.5 v4 M570.5,312.5 h4 M572.5,310.5 v4" stroke="#5a5a96" stroke-width="0.8" fill="none"/><path d="M571.500,286.300 C575,284.300 579.500,285.300 581,289.500" fill="none" stroke="#222" stroke-width="2.400"/><path d="M571.500,286.300 C575,284.300 579.500,285.300 581,289.500" fill="none" stroke="#fff" stroke-width="0.900"/><path d="M577,289.300 L583.300,289.800 L579.500,294Z" fill="#fff" stroke="#222" stroke-width="1"/></svg>
<div class="hr" style="top:340px"></div>
<div class="btn" style="top:349px">应用到再制</div>
<div class="btn" style="top:374px">应用</div>
</body></html>
